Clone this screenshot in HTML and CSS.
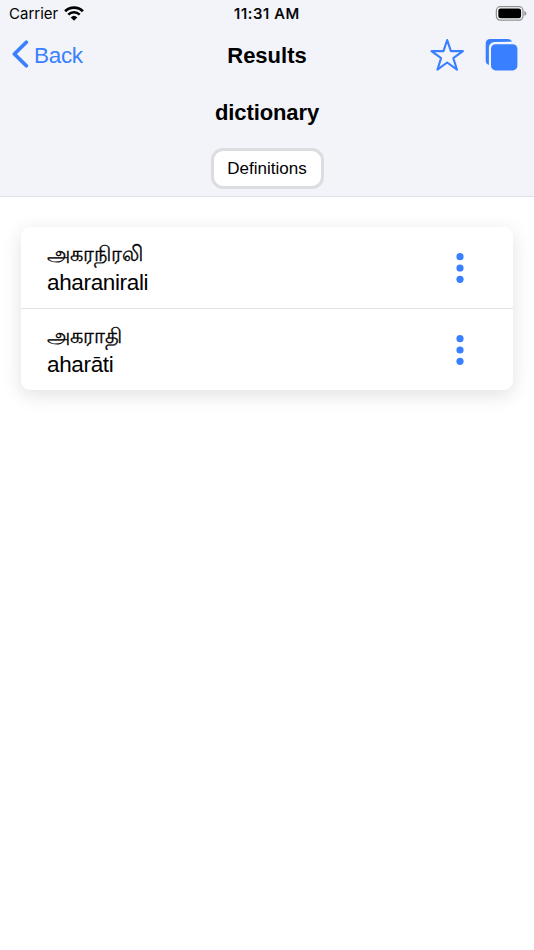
FILE: index.html
```html
<!DOCTYPE html>
<html lang="en">
<head>
  <meta charset="utf-8">
  <meta name="viewport" content="width=device-width, initial-scale=1.0">
  <title>Results</title>
  <link rel="stylesheet" href="styles.css">
</head>

<body>
  <header class="header">
    <!-- Status bar -->
    <div class="status">
      <div class="carrier">
        <span>Carrier</span>
        <svg class="wifi" width="20" height="15" viewBox="0 0 20 15">
          <path d="M1.1 5.2a12.8 12.8 0 0 1 17.8 0" fill="none" stroke="#000" stroke-width="2.7"/>
          <path d="M4.3 8.6a8.2 8.2 0 0 1 11.4 0" fill="none" stroke="#000" stroke-width="2.5"/>
          <path d="M10 14.8L6.7 11.4a4.8 4.8 0 0 1 6.6 0z"/>
        </svg>
      </div>
      <div class="time">11:31 AM</div>
      <svg class="battery" width="32" height="15" viewBox="0 0 32 15">
        <rect x="1.4" y=".7" width="26.6" height="13.4" rx="4" fill="#fff" stroke="#8f9092" stroke-width="1.3"/>
        <rect x="3.3" y="2.6" width="22.8" height="9.6" rx="2.2"/>
        <path d="M29.4 5q2 .6 2 2.4t-2 2.4z" fill="#8f9092"/>
      </svg>
    </div>

    <!-- Toolbar -->
    <div class="toolbar">
      <a class="back" href="#">
        <svg width="17" height="28" viewBox="0 0 17 28">
          <path d="M14.3 2.2L2.4 14l11.9 11.8" fill="none" stroke="currentColor" stroke-width="3.7" stroke-linecap="round" stroke-linejoin="round"/>
        </svg>
        <span>Back</span>
      </a>
      <h1>Results</h1>
      <div class="actions">
        <svg width="36" height="34" viewBox="0 0 36 34">
          <path d="M18.2 2L21.9 13.1H33.9L24.3 20.1L28 31.7L18.2 24.5L8.4 31.7L12.1 20.1L2.5 13.1H14.5z" fill="none" stroke="currentColor" stroke-width="2.1" stroke-linejoin="round"/>
        </svg>
        <svg width="34" height="34" viewBox="0 0 34 34">
          <path d="M27.1 3.6A4.5 4.5 0 0 0 22.9 1H4.9A4.2 4.2 0 0 0 .7 5.2v17.6A4.5 4.5 0 0 0 3.9 27V9.6A5.6 5.6 0 0 1 9.5 4z" fill="currentColor"/>
          <rect x="6" y="6.2" width="26.4" height="26.2" rx="4.6" fill="currentColor"/>
        </svg>
      </div>
    </div>

    <div class="word">
      <h2>dictionary</h2>
    </div>
    <div class="segment">
      <button class="segment-btn" type="button">Definitions</button>
    </div>
  </header>

  <main class="content">
    <ul class="card">
      <li class="item">
        <div class="label">
          <p class="tamil" lang="ta">அகரநிரலி</p>
          <p>aharanirali</p>
        </div>
        <svg class="more" width="8" height="32" viewBox="0 0 8 32">
          <circle cx="4" cy="4.7" r="3.6"/>
          <circle cx="4" cy="16" r="3.6"/>
          <circle cx="4" cy="27.3" r="3.6"/>
        </svg>
      </li>
      <li class="item">
        <div class="label">
          <p class="tamil" lang="ta">அகராதி</p>
          <p>aharāti</p>
        </div>
        <svg class="more" width="8" height="32" viewBox="0 0 8 32">
          <circle cx="4" cy="4.7" r="3.6"/>
          <circle cx="4" cy="16" r="3.6"/>
          <circle cx="4" cy="27.3" r="3.6"/>
        </svg>
      </li>
    </ul>
  </main>
</body>

</html>
```

FILE: styles.css
```css
* {
  box-sizing: border-box;
}

body {
  margin: 0;
  min-height: 950px;
  background-color: #ffffff;
  color: #000000;
  font-family: "Liberation Sans", sans-serif;
}

h1, h2, p, ul {
  margin: 0;
  padding: 0;
}

svg {
  display: block;
}

.header {
  height: 197px;
  background-color: #f3f4f9;
  border-bottom: 1px solid #e0e1e5;
}

/* Status bar */

.status {
  display: grid;
  grid-template-columns: 1fr auto 1fr;
  align-items: center;
  height: 28px;
  padding: 0 7px 0 9px;
  font-family: Inter, sans-serif;
  font-size: 15px;
  line-height: 18px;
}

.carrier {
  display: flex;
  align-items: center;
  gap: 6px;
}

.wifi {
  margin-top: -2px;
}

.time {
  margin: -1px 2px 0 0;
  font-weight: 500;
  letter-spacing: 0.6px;
  -webkit-text-stroke: 0.2px #000000;
}

.battery {
  justify-self: end;
  margin-top: -1px;
}

/* Toolbar */

.toolbar {
  display: grid;
  grid-template-columns: 1fr auto 1fr;
  align-items: center;
  height: 55px;
  padding: 0 15px 0 12px;
}

.toolbar h1,
.word h2 {
  font-size: 22px;
  line-height: 26px;
}

.toolbar h1 {
  margin-left: 3px;
}

.back {
  display: flex;
  align-items: center;
  gap: 5px;
  color: #3880ff;
  font-size: 22.5px;
  letter-spacing: -0.3px;
  text-decoration: none;
}

.back svg {
  margin-top: -3px;
}

.actions {
  display: flex;
  justify-content: flex-end;
  gap: 20px;
  margin-top: -2px;
  color: #3880ff;
}

.word,
.segment {
  display: flex;
  align-items: center;
  justify-content: center;
  height: 57px;
}

.word h2 {
  padding-top: 2px;
  letter-spacing: -0.1px;
}

.segment {
  height: 56px;
}

.segment-btn {
  width: 113px;
  height: 41px;
  padding: 1px 0 0;
  border: 3px solid #dcdde1;
  border-radius: 12px;
  background-color: #ffffff;
  color: #000000;
  font-family: inherit;
  font-size: 17px;
}

/* List of results */

.content {
  padding: 30px 21px;
}

.card {
  list-style: none;
  border-radius: 9px;
  background-color: #ffffff;
  box-shadow: 0 5px 20px rgba(0, 0, 0, 0.12);
}

.item {
  display: flex;
  align-items: center;
  justify-content: space-between;
  height: 81px;
  padding: 0 49px 0 26px;
}

.item + .item {
  height: 82px;
  border-top: 1px solid #e2e2e2;
}

.label {
  padding-top: 1px;
  font-size: 22.5px;
  line-height: 29px;
  letter-spacing: -0.35px;
}

.tamil {
  height: 29px;
  font-size: 20.8px;
  letter-spacing: 0;
  -webkit-text-stroke: 0.3px #000000;
}

.more {
  fill: #3880ff;
}
```
